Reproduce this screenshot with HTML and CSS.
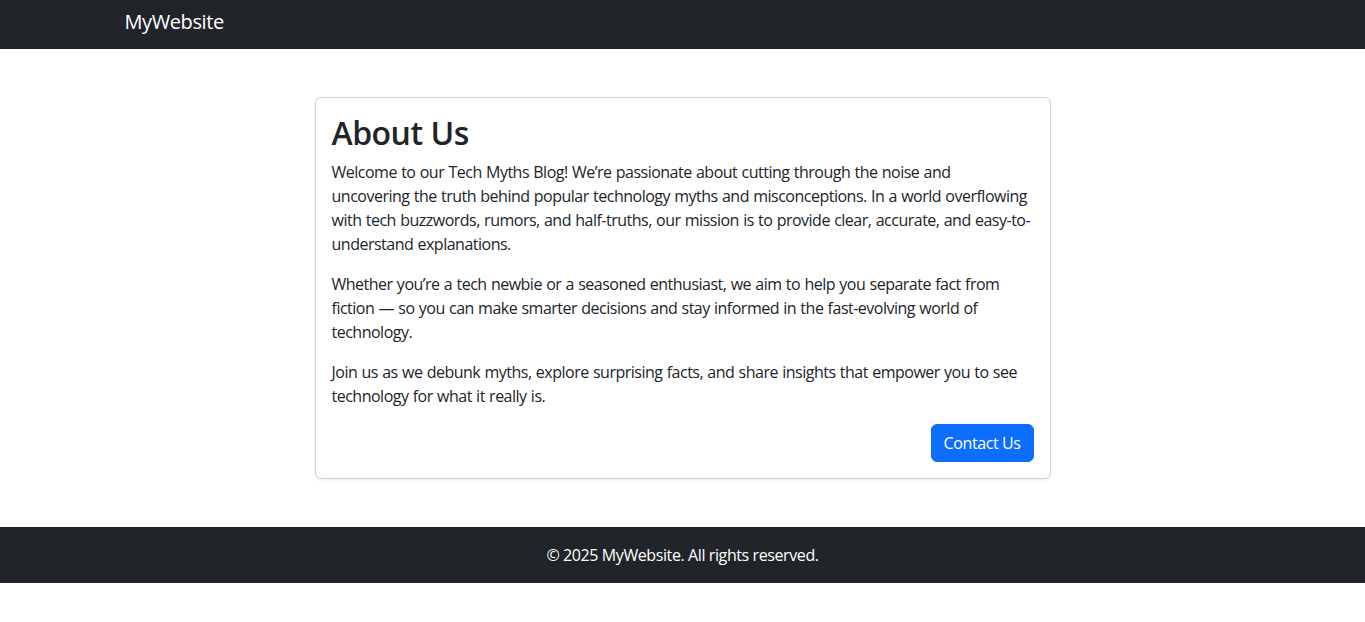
FILE: index.html
```html
<!DOCTYPE html>
<html lang="en">
<head>
<meta charset="utf-8">
<title>About Us - MyWebsite</title>
<link rel="stylesheet" href="styles.css">
</head>
<body>
<nav class="navbar">
  <div class="container">
    <a class="brand" href="#">MyWebsite</a>
  </div>
</nav>
<main class="container main">
  <div class="col">
    <div class="card">
      <h2 class="title">About Us</h2>
      <p>Welcome to our Tech Myths Blog! We’re passionate about cutting through the noise and uncovering&nbsp;the truth behind popular technology myths and misconceptions. In a world overflowing with tech buzzwords, rumors, and half-truths, our mission is to provide clear, accurate, and easy-to-understand explanations.</p>
      <p>Whether you’re a tech newbie or a seasoned enthusiast, we aim to help you separate fact from fiction — so you can make smarter decisions and stay informed in the fast-evolving world of technology.</p>
      <p>Join us as we debunk myths, explore surprising facts, and share insights that empower you to see technology for what it really is.</p>
      <div class="actions">
        <a class="btn" href="#">Contact Us</a>
      </div>
    </div>
  </div>
</main>
<footer class="footer">© 2025 MyWebsite. All rights reserved.</footer>
</body>
</html>
```
FILE: styles.css
```css
* { box-sizing: border-box; }
html, body { margin: 0; }
body {
  font-family: "Open Sans", "Noto Sans", sans-serif;
  font-size: 16px;
  line-height: 1.5;
  color: #212529;
  background: #fff;
}
.container {
  width: 1140px;
  margin: 0 auto;
  padding: 0 12px;
}
.navbar {
  background: #212529;
  height: 49px;
  padding-top: 7px;
}
.brand {
  display: inline-block;
  color: #fff;
  text-decoration: none;
  font-size: 20px;
  line-height: 30px;
  letter-spacing: -0.4px;
}
.main {
  margin-top: 48px;
  margin-bottom: 48px;
  display: flex;
  justify-content: center;
}
.col {
  width: 736px;
}
.card {
  border: 1px solid rgba(0,0,0,0.175);
  border-radius: 6px;
  padding: 16px;
  box-shadow: 0 1px 3px rgba(0,0,0,0.08);
}
.title {
  margin: 0 0 8px;
  font-size: 32px;
  line-height: 38.4px;
  font-weight: 600;
  letter-spacing: -0.5px;
}
p {
  margin: 0 0 16px;
  font-size: 16px;
  letter-spacing: -0.5px;
  word-spacing: 0.6px;
}
.actions {
  display: flex;
  justify-content: flex-end;
}
.btn {
  display: inline-block;
  background: #0d6efd;
  color: #fff;
  text-decoration: none;
  padding: 6px 12px;
  border-radius: 6px;
  line-height: 24px;
  border: 1px solid #0d6efd;
  letter-spacing: -0.4px;
}
.footer {
  background: #212529;
  color: #fff;
  text-align: center;
  padding: 16px 0;
  line-height: 24px;
  letter-spacing: -0.4px;
}
```
